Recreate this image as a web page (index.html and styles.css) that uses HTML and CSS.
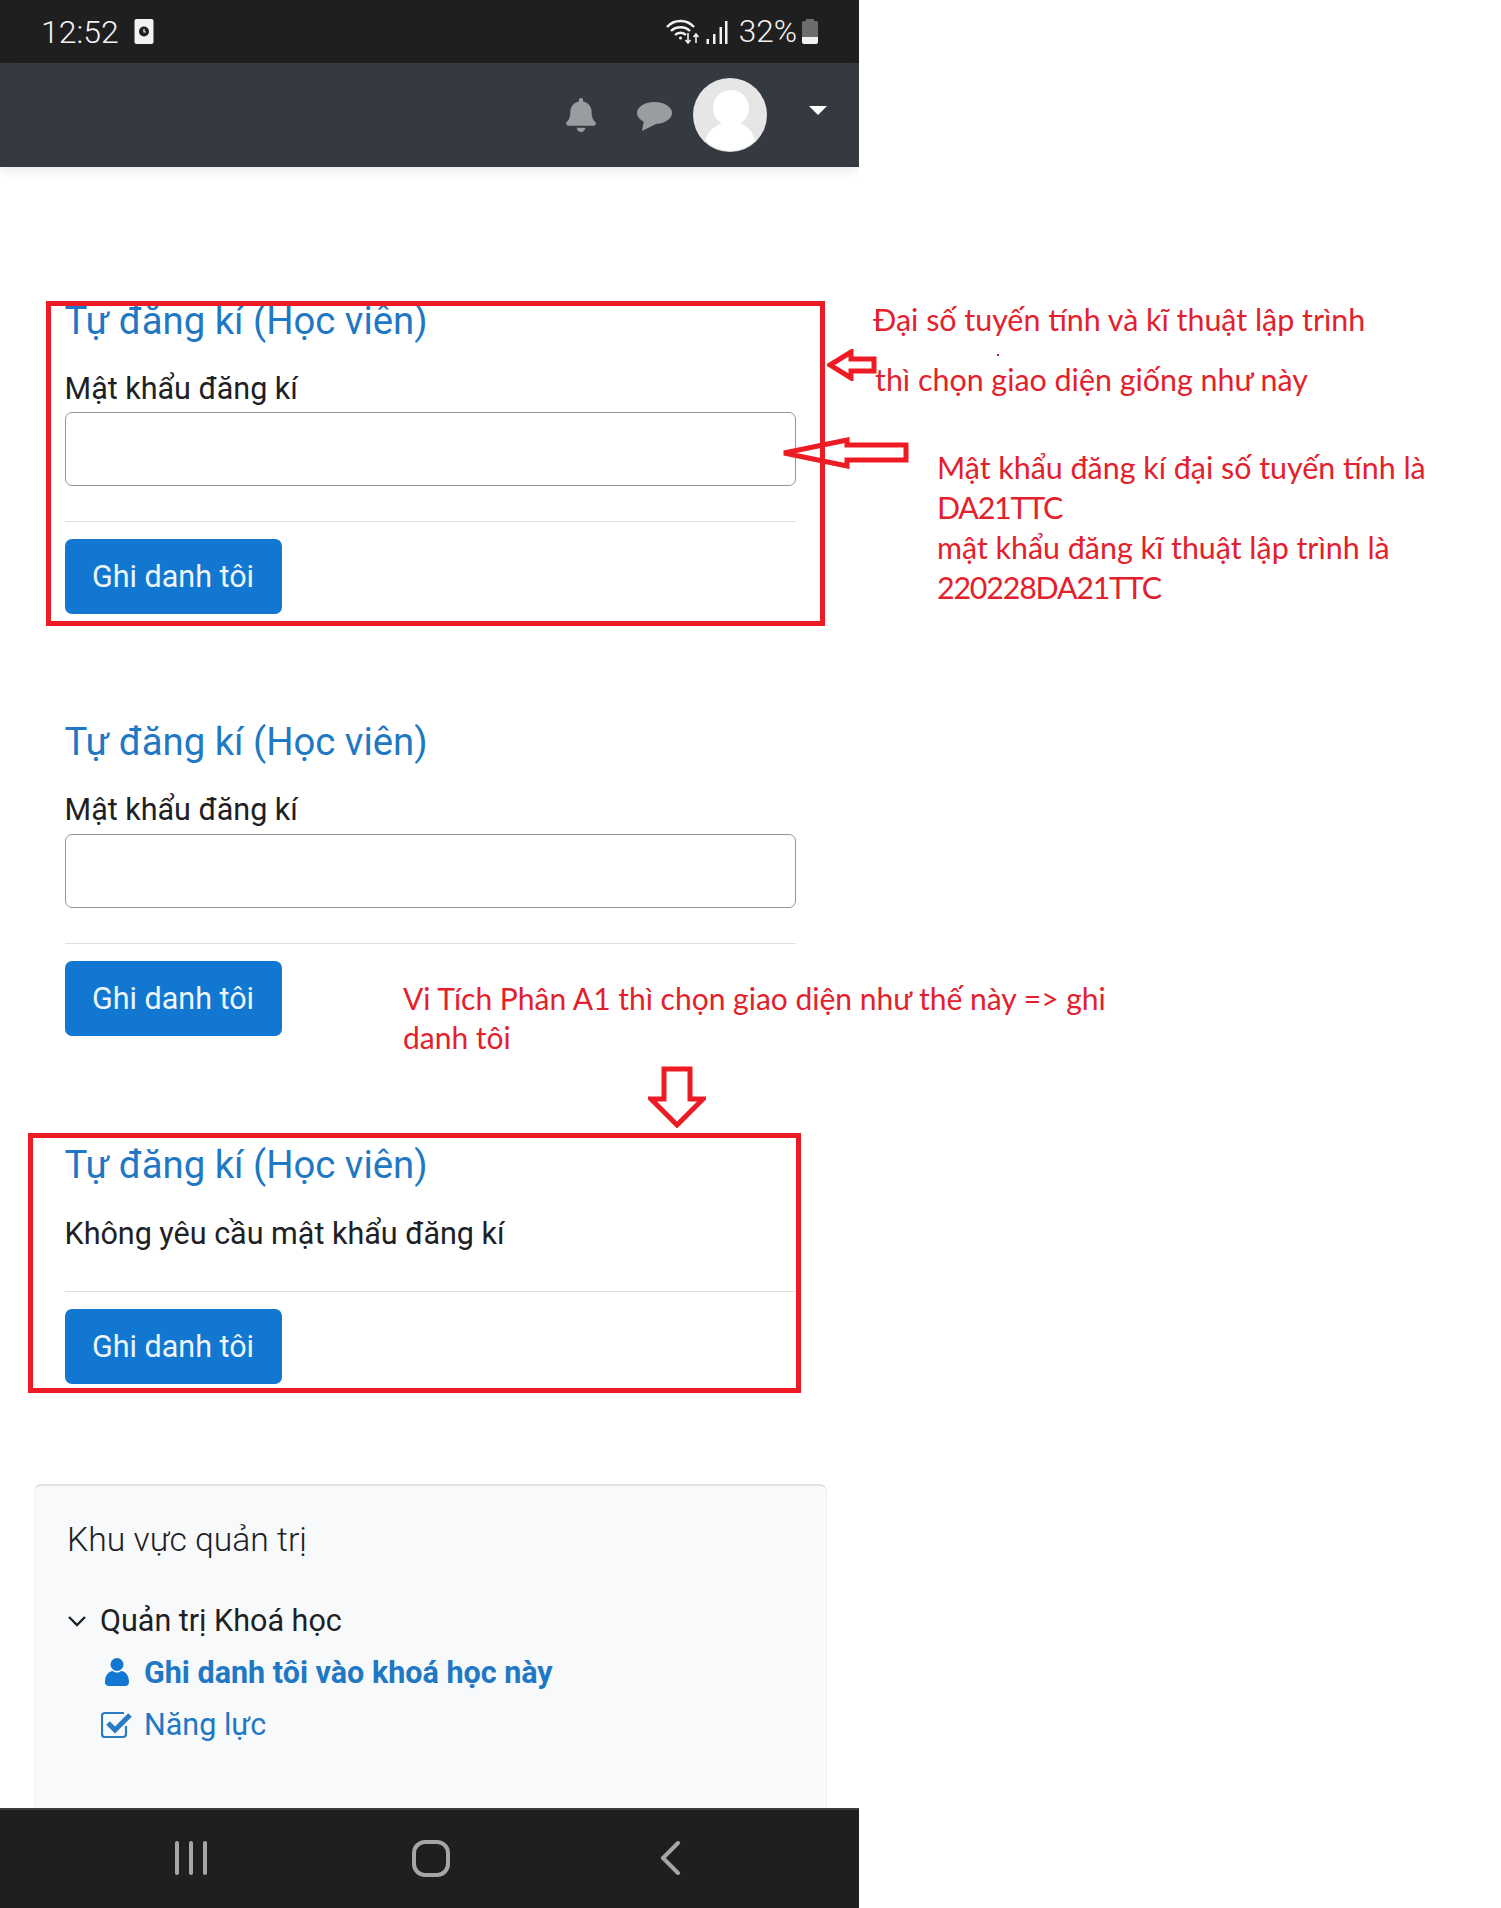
FILE: index.html
```html
<!DOCTYPE html>
<html>
<head>
	<meta charset="UTF-8">
	<title>Tự đăng kí</title>
	<link rel="stylesheet" href="styles.css">
</head>
<body>
	<div class="phone">
		<div class="status-bar">
			<span class="clock">12:52</span>
			<svg class="status-photo" viewBox="0 0 19 25"><rect width="19" height="25" rx="2" fill="#f2f2f2"/><circle cx="9.5" cy="12.5" r="5" fill="#1f1f1f"/><path d="M9.5 10v3h2" stroke="#f2f2f2" stroke-width="1.2" fill="none"/></svg>
			<span class="status-right">
				<svg class="status-wifi" viewBox="0 0 34 25" fill="none" stroke="#f2f2f2" stroke-width="2.4"><path d="M1 8C8 0 21 0 28 8"/><path d="M5 12c5-5 14-5 19 0"/><path d="M9 16c3-3 8-3 11 0"/><circle cx="14.500" cy="19" r="1.500" fill="#f2f2f2" stroke="none"/><path d="M22 14v10M19.500 21l2.500 3 2.500-3M30 24v-9M27.500 18l2.500-3 2.500 3" stroke-width="1.600"/></svg>
				<svg class="status-signal" viewBox="0 0 22 25" fill="#f2f2f2"><rect x="0.500" y="20" width="2.500" height="5"/><rect x="7" y="15" width="2.500" height="10"/><rect x="13.500" y="8" width="2.500" height="17"/><rect x="19" y="2" width="2.500" height="23"/></svg>
				<span class="battery-text">32%</span>
				<svg class="status-battery" viewBox="0 0 16 25"><path d="M4 0h8v2h2a2 2 0 0 1 2 2v15H0V4a2 2 0 0 1 2-2h2z" fill="#6d6d6d"/><path d="M0 18h16v5a2 2 0 0 1-2 2H2a2 2 0 0 1-2-2z" fill="#f2f2f2"/></svg>
			</span>
		</div>

		<div class="top-nav">
			<svg class="nav-bell" viewBox="0 0 448 512"><path d="M224 512c35.32 0 63.97-28.65 63.97-64H160.03c0 35.35 28.65 64 63.97 64zm215.39-149.71c-19.32-20.76-55.47-51.99-55.47-154.29 0-77.7-54.48-139.9-127.94-155.16V32c0-17.67-14.32-32-31.98-32s-31.98 14.33-31.98 32v20.84C118.56 68.1 64.08 130.3 64.08 208c0 102.3-36.15 133.53-55.47 154.29-6 6.45-8.66 14.16-8.61 21.71.11 16.4 12.98 32 32.1 32h383.8c19.12 0 32-15.6 32.1-32 .05-7.55-2.61-15.27-8.61-21.71z"/></svg>
			<svg class="nav-comment" viewBox="0 0 35 29"><ellipse cx="17.500" cy="11" rx="17.500" ry="11"/><path d="M7 18l-2 11 14-7z"/></svg>
			<svg class="nav-avatar" viewBox="0 0 74 74"><circle cx="37" cy="37" r="37" fill="#e6e6e6"/><circle cx="38" cy="30" r="18" fill="#fff"/><path d="M12 63c3-12 14-19 26-19s22 7 24 19a37 37 0 0 1-50 0z" fill="#fff"/></svg>
			<span class="nav-caret"></span>
		</div>

		<div class="page-main">
			<section class="enrol enrol-first">
				<h3 class="enrol-title">Tự đăng kí (Học viên)</h3>
				<label class="enrol-label">Mật khẩu đăng kí</label>
				<input class="enrol-input" type="text">
				<hr class="enrol-rule">
				<button class="enrol-btn" type="button">Ghi danh tôi</button>
			</section>

			<section class="enrol enrol-second">
				<h3 class="enrol-title">Tự đăng kí (Học viên)</h3>
				<label class="enrol-label">Mật khẩu đăng kí</label>
				<input class="enrol-input" type="text">
				<hr class="enrol-rule">
				<button class="enrol-btn" type="button">Ghi danh tôi</button>
			</section>

			<section class="enrol enrol-third">
				<h3 class="enrol-title">Tự đăng kí (Học viên)</h3>
				<p class="enrol-note">Không yêu cầu mật khẩu đăng kí</p>
				<hr class="enrol-rule enrol-rule-note">
				<button class="enrol-btn" type="button">Ghi danh tôi</button>
			</section>

			<aside class="admin-panel">
				<h5 class="admin-title">Khu vực quản trị</h5>
				<div class="admin-head">
					<svg class="admin-chevron" viewBox="0 0 20 12" fill="none" stroke="#1d2125" stroke-width="2.400"><path d="M2 2l8 8 8-8"/></svg>
					<span>Quản trị Khoá học</span>
				</div>
				<a class="admin-link admin-link-strong" href="#">
					<svg class="admin-user" viewBox="0 0 24 28"><circle cx="12" cy="6.500" r="6.500"/><path d="M0 24c0-7 4-11 8-11 2 2 6 2 8 0 4 0 8 4 8 11a4 4 0 0 1-4 4H4a4 4 0 0 1-4-4z"/></svg>
					<span>Ghi danh tôi vào khoá học này</span>
				</a>
				<a class="admin-link" href="#">
					<svg class="admin-check" viewBox="0 0 32 28" fill="none" stroke="#2a7bc0"><path d="M25 15v8a3 3 0 0 1-3 3H4a3 3 0 0 1-3-3V5a3 3 0 0 1 3-3h19" stroke-width="2.200"/><path d="M7 12l7 7L29 4" stroke-width="5"/></svg>
					<span>Năng lực</span>
				</a>
			</aside>
		</div>

		<div class="bottom-nav">
			<svg class="soft-recent" viewBox="0 0 34 34" stroke="#a6a6a6" stroke-width="4" stroke-linecap="round"><path d="M3 2v30M17 2v30M31 2v30"/></svg>
			<svg class="soft-home" viewBox="0 0 38 37" fill="none" stroke="#a6a6a6" stroke-width="4"><rect x="2" y="2" width="34" height="33" rx="11"/></svg>
			<svg class="soft-back" viewBox="0 0 21 34" fill="none" stroke="#a6a6a6" stroke-width="4" stroke-linecap="round" stroke-linejoin="round"><path d="M18 2L3 17l15 15"/></svg>
		</div>
	</div>

	<!-- red notes drawn over the screenshot -->
	<div class="mark-box mark-box-one"></div>
	<div class="mark-box mark-box-two"></div>

	<p class="note note-algebra">Đại số tuyến tính và kĩ thuật lập trình</p>
	<p class="note note-choose">thì chọn giao diện giống như này</p>
	<p class="note note-pass">Mật khẩu đăng kí đại số tuyến tính là<br><span class="note-code">DA21TTC</span><br>mật khẩu đăng kĩ thuật lập trình là<br><span class="note-code">220228DA21TTC</span></p>
	<p class="note note-calc">Vi Tích Phân A1 thì chọn giao diện như thế này =&gt; ghi<br>danh tôi</p>
	<span class="note-dot"></span>

	<svg class="mark-arrow arrow-small" viewBox="0 0 50 32"><path d="M3 16L24 3v7h23v12H24v7z"/></svg>
	<svg class="mark-arrow arrow-long" viewBox="0 0 128 32"><path d="M3 16L66 3v5h59v15H66v6z"/></svg>
	<svg class="mark-arrow arrow-down" viewBox="0 0 58 62"><path d="M16 3h26v30h13L29 59 3 33h13z"/></svg>
</body>
</html>
```

FILE: styles.css
```css
body {
	margin: 0;
	background: #fff;
	font-family: Roboto, "Liberation Sans", sans-serif;
	color: #1d2125;
}

.phone {
	width: 859px;
	height: 1908px;
	display: flex;
	flex-direction: column;
	overflow: hidden;
}

/* status bar */
.status-bar {
	height: 63px;
	flex: none;
	background: #1f1f1f;
	color: #f2f2f2;
	display: flex;
	align-items: center;
	padding: 0 41px 0 41px;
	box-sizing: border-box;
}
.clock {
	font-size: 32px;
	font-weight: 300;
}
.status-photo {
	width: 20px;
	height: 25px;
	margin-left: 15px;
}
.status-right {
	margin-left: auto;
	display: flex;
	align-items: center;
}
.status-wifi {
	width: 34px;
	height: 25px;
}
.status-signal {
	width: 22px;
	height: 25px;
	margin-left: 6px;
}
.battery-text {
	font-size: 31.500px;
	font-weight: 300;
	margin-left: 11px;
}
.status-battery {
	width: 16px;
	height: 25px;
	margin-left: 5px;
}

/* dark header */
.top-nav {
	height: 104px;
	flex: none;
	background: #343a40;
	display: flex;
	align-items: center;
	padding-right: 32px;
	box-sizing: border-box;
	justify-content: flex-end;
	box-shadow: 0 4px 10px rgba(0, 0, 0, 0.08);
	position: relative;
}
.nav-bell {
	width: 32px;
	height: 34px;
	fill: #999da0;
	margin-bottom: 1px;
}
.nav-comment {
	width: 35px;
	height: 29px;
	fill: #999da0;
	margin-left: 40px;
	margin-top: 3px;
}
.nav-avatar {
	width: 74px;
	height: 74px;
	margin-left: 21px;
}
.nav-caret {
	width: 0;
	height: 0;
	border-left: 9px solid transparent;
	border-right: 9px solid transparent;
	border-top: 9px solid #fff;
	margin-left: 42px;
	margin-bottom: 10px;
}

/* page */
.page-main {
	flex: 1;
	min-height: 0;
	overflow: hidden;
	display: flex;
	flex-direction: column;
}
.enrol {
	margin-left: 64.5px;
	width: 731px;
}
.enrol-first {
	margin-top: 129.500px;
}
.enrol-second {
	margin-top: 104.300px;
}
.enrol-third {
	margin-top: 104.800px;
}
.enrol-title {
	margin: 0;
	font-size: 38.300px;
	font-weight: 400;
	line-height: 48px;
	color: #1f78c4;
}
.enrol-label {
	display: block;
	margin-top: 22px;
	font-size: 30.500px;
	line-height: 44px;
}
.enrol-input {
	display: block;
	width: 100%;
	height: 74px;
	margin-top: 1.500px;
	box-sizing: border-box;
	border: 1.500px solid #8f959e;
	border-radius: 7px;
	background: #fff;
}
.enrol-rule {
	margin: 35px 0 17px;
	border: 0;
	border-top: 1.500px solid #e0e0e0;
}
.enrol-note {
	margin: 23px 0 0;
	font-size: 30.500px;
	line-height: 44px;
}
.enrol-rule-note {
	margin-top: 35px;
}
.enrol-btn {
	display: block;
	width: 217px;
	height: 75px;
	padding: 0;
	border: 0;
	border-radius: 7px;
	background: #1177d1;
	color: #eef6fc;
	font-family: Roboto, "Liberation Sans", sans-serif;
	font-size: 30.500px;
}

/* admin block */
.admin-panel {
	margin: 100px 32px 0 34px;
	flex: 1;
	background: #f8f9fa;
	border-top: 2px solid #dee2e6;
	border-left: 1px solid #eef0f2;
	border-right: 1px solid #eef0f2;
	border-radius: 7px 7px 0 0;
	padding: 32px 0 0 32px;
}
.admin-title {
	margin: 0;
	font-size: 33.700px;
	font-weight: 300;
	line-height: 44px;
}
.admin-head {
	display: flex;
	align-items: center;
	margin-top: 37.500px;
	font-size: 30.500px;
	line-height: 44px;
}
.admin-chevron {
	width: 20px;
	height: 12px;
	margin-right: 13px;
}
.admin-link {
	display: flex;
	align-items: center;
	margin-top: 9px;
	padding-left: 34px;
	font-size: 30.500px;
	line-height: 43px;
	color: #1f78c4;
	text-decoration: none;
}
.admin-link-strong {
	font-weight: 700;
	margin-top: 8px;
}
.admin-user {
	width: 24px;
	height: 28px;
	fill: #1177d1;
	margin-left: 4px;
	margin-right: 15px;
	margin-bottom: 2px;
}
.admin-check {
	width: 32px;
	height: 28px;
	margin-right: 11px;
}

/* android buttons */
.bottom-nav {
	height: 100px;
	flex: none;
	background: #1f1f1f;
	border-top: 2px solid #3c3c3c;
	box-sizing: border-box;
	display: flex;
	align-items: center;
	padding-left: 174px;
	padding-bottom: 2px;
}
.soft-recent {
	width: 34px;
	height: 34px;
}
.soft-home {
	width: 38px;
	height: 37px;
	margin-left: 204px;
}
.soft-back {
	width: 21px;
	height: 34px;
	margin-left: 210px;
}

/* red marks */
.mark-box {
	position: absolute;
	box-sizing: border-box;
	border: 5px solid #ed1c24;
}
.mark-box-one {
	left: 46px;
	top: 301px;
	width: 779px;
	height: 325px;
}
.mark-box-two {
	left: 28px;
	top: 1133px;
	width: 773px;
	height: 260px;
}
.note {
	position: absolute;
	margin: 0;
	font-family: Lato, "Noto Sans", sans-serif;
	font-size: 30.400px;
	line-height: 40px;
	color: #e3202b;
	white-space: nowrap;
}
.note-code {
	letter-spacing: -1.200px;
}
.note-algebra {
	left: 873px;
	top: 299px;
}
.note-choose {
	left: 875px;
	top: 359px;
}
.note-pass {
	left: 937px;
	top: 447px;
}
.note-calc {
	left: 403px;
	top: 979px;
	font-size: 30px;
	line-height: 39px;
}
.note-dot {
	position: absolute;
	left: 997px;
	top: 354px;
	width: 2px;
	height: 2px;
	background: #c0222a;
}
.mark-arrow {
	position: absolute;
	fill: #fff;
	stroke: #ed1c24;
	stroke-width: 5;
	stroke-linejoin: miter;
}
.arrow-small {
	left: 827px;
	top: 349px;
	width: 50px;
	height: 32px;
}
.arrow-long {
	left: 781px;
	top: 437px;
	width: 128px;
	height: 32px;
	fill: none;
}
.arrow-down {
	left: 648px;
	top: 1066px;
	width: 58px;
	height: 62px;
}
```
